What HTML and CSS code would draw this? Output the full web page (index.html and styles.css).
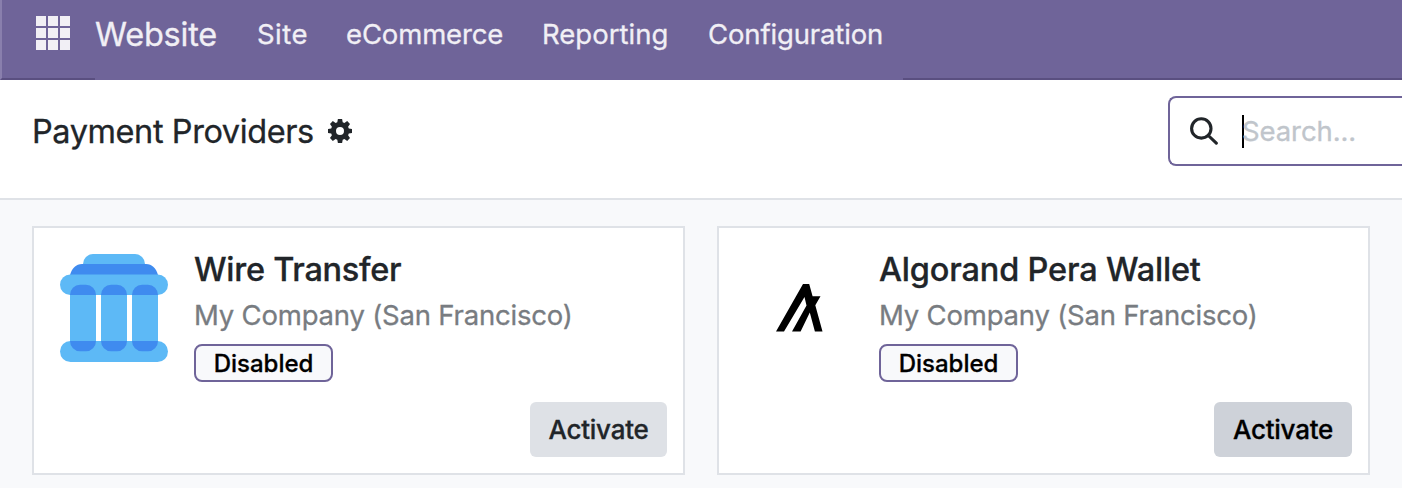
FILE: index.html
```html
<!DOCTYPE html>
<html lang="en">
<head>
<meta charset="utf-8">
<title>Payment Providers</title>
<link rel="stylesheet" href="styles.css">
</head>
<body>
<header class="navbar">
  <div class="apps">
    <svg class="apps-icon" viewBox="0 0 34 34" width="34" height="34" shape-rendering="crispEdges"><path d="M0 0h10v10H0zM12 0h10v10H12zM24 0h10v10H24zM0 12h10v10H0zM12 12h10v10H12zM24 12h10v10H24zM0 24h10v10H0zM12 24h10v10H12zM24 24h10v10H24z"/></svg>
  </div>
  <nav class="menu">
    <a class="brand">Website</a>
    <a class="item site">Site</a>
    <a class="item ecommerce">eCommerce</a>
    <a class="item reporting">Reporting</a>
    <a class="item configuration">Configuration</a>
  </nav>
  <div class="navbar-rest"></div>
</header>
<section class="control-panel">
  <div class="heading">
    <h1 class="title">Payment Providers</h1>
    <svg class="gear" viewBox="0 0 24 24" width="24" height="24"><path fill-rule="evenodd" d="M9.900 0h4.200l.6 3.300 1.700.7 2.800-1.900 2.800 2.800-1.900 2.800.7 1.700 3.200.6v4l-3.200.6-.7 1.700 1.900 2.800-2.800 2.800-2.800-1.900-1.700.7-.6 3.300H9.900l-.6-3.300-1.700-.7-2.800 1.900L2 19.100l1.900-2.800-.7-1.700L0 14v-4l3.200-.6.7-1.700L2 4.900 4.800 2.100 7.600 4l1.700-.7zM12 8a4 4 0 1 0 0 8 4 4 0 0 0 0-8z"/></svg>
  </div>
  <div class="search">
    <svg class="search-icon" viewBox="0 0 28 28" width="28" height="28"><circle cx="11.300" cy="11.400" r="9.700"/><path d="M18.300 18.500l8 7.700"/></svg>
    <span class="caret"></span><span class="placeholder">Search...</span>
  </div>
</section>
<main class="cards">
  <article class="card">
    <div class="logo">
      <svg class="bank" viewBox="0 0 108 108" width="108" height="108">
        <path class="light" d="M23 11V10A10 10 0 0 1 33 0H75A10 10 0 0 1 85 10V11z"/>
        <path class="dark" d="M10 21C12 14 16 10 22 10H86C92 10 96 14 98 21z"/>
        <rect class="light" y="20.500" width="108" height="20.500" rx="10.250"/>
        <rect class="light" y="87" width="108" height="21" rx="10.500"/>
        <path class="light" d="M10 41h26v46H10zM41 41h26v46H41zM72 41h26v46H72z"/>
        <path class="dark" d="M10 41a10 10.300 0 0 1 10-10.300h6A10 10.300 0 0 1 36 41zM41 41a10 10.300 0 0 1 10-10.300h6A10 10.300 0 0 1 67 41zM72 41a10 10.300 0 0 1 10-10.300h6A10 10.300 0 0 1 98 41zM10 87h26a10 10.300 0 0 1-10 10.300h-6A10 10.300 0 0 1 10 87zM41 87h26a10 10.300 0 0 1-10 10.300h-6A10 10.300 0 0 1 41 87zM72 87h26a10 10.300 0 0 1-10 10.300h-6A10 10.300 0 0 1 72 87z"/>
      </svg>
    </div>
    <div class="details">
      <h2 class="name wire">Wire Transfer</h2>
      <p class="company">My Company (San Francisco)</p>
      <span class="badge">Disabled</span>
    </div>
    <button class="activate">Activate</button>
  </article>
  <article class="card">
    <div class="logo">
      <svg class="algorand" viewBox="0 0 47 48" width="47" height="48"><path d="M27 0h6.200l3.400 12.300h7.900l-5.200 9L46.500 47.500h-7.600L33.800 28.400 24.600 47.500H16L30.500 21.600 28.500 13 8 47.500H0z"/></svg>
    </div>
    <div class="details">
      <h2 class="name">Algorand Pera Wallet</h2>
      <p class="company">My Company (San Francisco)</p>
      <span class="badge">Disabled</span>
    </div>
    <button class="activate hovered">Activate</button>
  </article>
</main>
</body>
</html>
```
FILE: styles.css
```css
* { box-sizing: border-box; }
body {
  margin: 0;
  height: 488px;
  overflow: hidden;
  background: #f8f9fb;
  color: #212529;
  font-family: Inter, sans-serif;
  font-size: 27.5px;
  white-space: nowrap;
  -webkit-text-stroke: .3px currentColor;
}
h1, h2, p { margin: 0; font-weight: 400; }

.navbar { display: flex; height: 80px; background: #6f6499; color: #f1eff5; }
.apps { width: 95px; padding: 16px 0 0 34px; border-left: 2px solid #897fad; border-bottom: 2px solid #5a4f80; }
.apps-icon { display: block; fill: #f1eff5; }
.menu { display: flex; width: 808px; line-height: 68px; }
.brand { width: 162px; font-size: 32.5px; line-height: 70px; letter-spacing: -.2px; }
.site { width: 89px; letter-spacing: .45px; }
.ecommerce { width: 196px; letter-spacing: -.14px; }
.reporting { width: 166px; letter-spacing: .02px; }
.configuration { letter-spacing: -.14px; }
.navbar-rest { flex: 1; border-bottom: 2px solid #5a4f80; }

.control-panel {
  display: flex;
  justify-content: space-between;
  height: 120px;
  padding: 16px 0 0 32px;
  background: #fff;
  border-bottom: 2px solid #dfe2e7;
}
.heading { display: flex; align-items: center; height: 70px; }
.title { width: 296px; padding-top: 2px; font-size: 32.5px; line-height: 70px; letter-spacing: -.42px; }
.gear { fill: #212529; }
.search {
  display: flex;
  align-items: center;
  width: 234px;
  height: 70px;
  padding-left: 20px;
  border: 2px solid #6f6499;
  border-right: 0;
  border-radius: 8px 0 0 8px;
}
.search-icon { fill: none; stroke: #212529; stroke-width: 3.1; stroke-linecap: round; }
.caret { width: 2px; height: 33px; margin-left: 24px; background: #000; }
.placeholder { margin-left: -2px; color: #c0c5cb; letter-spacing: -.1px; }

.cards { display: grid; grid-template-columns: 653px 653px; gap: 32px; padding: 26px 32px 0; }
.card {
  display: grid;
  grid-template-columns: 108px 1fr;
  grid-template-rows: 148px 55px;
  column-gap: 26px;
  height: 249px;
  padding: 26px 16px 0 26px;
  background: #fff;
  border: 2px solid #dfe2e7;
}
.logo { display: flex; align-items: center; justify-content: center; height: 108px; }
.light { fill: #5db9f6; }
.dark { fill: #3f8bef; }
.details { display: flex; flex-direction: column; align-items: flex-start; }
.name { height: 37px; font-size: 32.5px; font-weight: 500; line-height: 32px; letter-spacing: -.18px; }
.wire { letter-spacing: -.27px; }
.company { height: 53px; color: #787c81; line-height: 48px; letter-spacing: -.2px; }
.badge {
  width: 139px;
  height: 38px;
  background: #f8f9fb;
  border: 2px solid #6f6499;
  border-radius: 8px;
  color: #000;
  font-size: 24px;
  font-weight: 500;
  line-height: 36px;
  text-align: center;
}
.activate {
  grid-column: 2;
  justify-self: end;
  width: 137px;
  height: 55px;
  padding: 0;
  border: 0;
  border-radius: 6px;
  background: #dee1e6;
  color: #212529;
  font: 500 26px/55px Inter, sans-serif;
  letter-spacing: -.25px;
}
.hovered { width: 138px; background: #ced2d9; color: #000; }
```
